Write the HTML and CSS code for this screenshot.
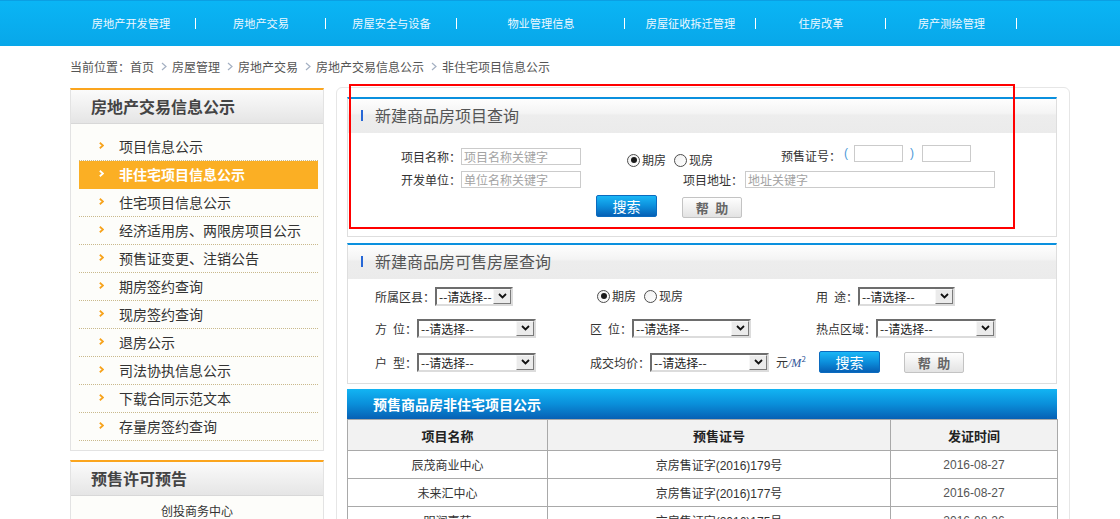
FILE: index.html
```html
<!DOCTYPE html>
<html lang="zh-CN">
<head>
<meta charset="utf-8">
<title>非住宅项目信息公示</title>
<link rel="stylesheet" href="styles.css">
</head>
<body>
<div class="topnav">
  <ul class="nav">
    <li class="nav-item">房地产开发管理</li>
    <li class="nav-item">房地产交易</li>
    <li class="nav-item w131">房屋安全与设备</li>
    <li class="nav-item w168">物业管理信息</li>
    <li class="nav-item w131">房屋征收拆迁管理</li>
    <li class="nav-item">住房改革</li>
    <li class="nav-item w131">房产测绘管理</li>
  </ul>
</div>

<div class="crumbs">当前位置：首页<svg class="gt" viewBox="0 0 6 9" width="6" height="9"><path d="M1 1l4 3.5L1 8" fill="none" stroke="#a4b0c2" stroke-width="1.2"/></svg>房屋管理<svg class="gt" viewBox="0 0 6 9" width="6" height="9"><path d="M1 1l4 3.5L1 8" fill="none" stroke="#a4b0c2" stroke-width="1.2"/></svg>房地产交易<svg class="gt" viewBox="0 0 6 9" width="6" height="9"><path d="M1 1l4 3.5L1 8" fill="none" stroke="#a4b0c2" stroke-width="1.2"/></svg>房地产交易信息公示<svg class="gt" viewBox="0 0 6 9" width="6" height="9"><path d="M1 1l4 3.5L1 8" fill="none" stroke="#a4b0c2" stroke-width="1.2"/></svg>非住宅项目信息公示</div>

<div class="main">
  <aside class="side">
    <div class="box">
      <h2 class="box-title">房地产交易信息公示</h2>
      <ul class="menu">
        <li><svg class="arr" viewBox="0 0 5 7" width="5" height="7"><path d="M.8.8L4 3.5.8 6.2" fill="none" stroke="currentColor" stroke-width="1.8"/></svg>项目信息公示</li>
        <li class="on"><svg class="arr" viewBox="0 0 5 7" width="5" height="7"><path d="M.8.8L4 3.5.8 6.2" fill="none" stroke="currentColor" stroke-width="1.8"/></svg>非住宅项目信息公示</li>
        <li><svg class="arr" viewBox="0 0 5 7" width="5" height="7"><path d="M.8.8L4 3.5.8 6.2" fill="none" stroke="currentColor" stroke-width="1.8"/></svg>住宅项目信息公示</li>
        <li><svg class="arr" viewBox="0 0 5 7" width="5" height="7"><path d="M.8.8L4 3.5.8 6.2" fill="none" stroke="currentColor" stroke-width="1.8"/></svg>经济适用房、两限房项目公示</li>
        <li><svg class="arr" viewBox="0 0 5 7" width="5" height="7"><path d="M.8.8L4 3.5.8 6.2" fill="none" stroke="currentColor" stroke-width="1.8"/></svg>预售证变更、注销公告</li>
        <li><svg class="arr" viewBox="0 0 5 7" width="5" height="7"><path d="M.8.8L4 3.5.8 6.2" fill="none" stroke="currentColor" stroke-width="1.8"/></svg>期房签约查询</li>
        <li><svg class="arr" viewBox="0 0 5 7" width="5" height="7"><path d="M.8.8L4 3.5.8 6.2" fill="none" stroke="currentColor" stroke-width="1.8"/></svg>现房签约查询</li>
        <li><svg class="arr" viewBox="0 0 5 7" width="5" height="7"><path d="M.8.8L4 3.5.8 6.2" fill="none" stroke="currentColor" stroke-width="1.8"/></svg>退房公示</li>
        <li><svg class="arr" viewBox="0 0 5 7" width="5" height="7"><path d="M.8.8L4 3.5.8 6.2" fill="none" stroke="currentColor" stroke-width="1.8"/></svg>司法协执信息公示</li>
        <li><svg class="arr" viewBox="0 0 5 7" width="5" height="7"><path d="M.8.8L4 3.5.8 6.2" fill="none" stroke="currentColor" stroke-width="1.8"/></svg>下载合同示范文本</li>
        <li><svg class="arr" viewBox="0 0 5 7" width="5" height="7"><path d="M.8.8L4 3.5.8 6.2" fill="none" stroke="currentColor" stroke-width="1.8"/></svg>存量房签约查询</li>
      </ul>
    </div>
    <div class="box box2">
      <h2 class="box-title">预售许可预告</h2>
      <ul class="pre-list">
        <li>创投商务中心</li>
      </ul>
    </div>
  </aside>

  <section class="content">
    <div class="panel">
      <div class="panel-head">新建商品房项目查询</div>
      <div class="q1">
        <div class="q1-row q1-r1">
          <span class="lbl q1-lbl">项目名称：</span>
          <input class="ipt ipt-name" type="text" placeholder="项目名称关键字">
          <div class="radios q1-radios">
            <span class="radio on"></span><span class="radio-txt">期房</span>
            <span class="radio"></span><span class="radio-txt">现房</span>
          </div>
          <span class="lbl q1-cert-lbl">预售证号：</span>
          <span class="paren paren-l">(</span>
          <input class="ipt ipt-cert" type="text">
          <span class="paren paren-r">)</span>
          <input class="ipt ipt-cert" type="text">
        </div>
        <div class="q1-row q1-r2">
          <span class="lbl q1-lbl">开发单位：</span>
          <input class="ipt ipt-name" type="text" placeholder="单位名称关键字">
          <span class="lbl q1-addr-lbl">项目地址：</span>
          <input class="ipt ipt-addr" type="text" placeholder="地址关键字">
        </div>
        <div class="q1-row q1-r3">
          <button class="btn-search q1-search" type="button">搜索</button>
          <button class="btn-help q1-help" type="button">帮&ensp;助</button>
        </div>
      </div>
    </div>

    <div class="panel">
      <div class="panel-head">新建商品房可售房屋查询</div>
      <div class="q2">
        <div class="q2-row q2-r1">
          <div class="q2-c1"><span class="lbl">所属区县：</span><div class="sel s78"><span>--请选择--</span><span class="sel-btn"><svg viewBox="0 0 9 6" width="9" height="6"><path d="M1 1l3.5 3.5L8 1" fill="none" stroke="#111" stroke-width="1.8"/></svg></span></div></div>
          <div class="q2-c2">
            <div class="radios q2-radios">
              <span class="radio on"></span><span class="radio-txt">期房</span>
              <span class="radio"></span><span class="radio-txt">现房</span>
            </div>
          </div>
          <div class="q2-c3"><span class="lbl">用&ensp;途：</span><div class="sel s97"><span>--请选择--</span><span class="sel-btn"><svg viewBox="0 0 9 6" width="9" height="6"><path d="M1 1l3.5 3.5L8 1" fill="none" stroke="#111" stroke-width="1.8"/></svg></span></div></div>
        </div>
        <div class="q2-row q2-r2">
          <div class="q2-c1"><span class="lbl">方&ensp;位：</span><div class="sel s119"><span>--请选择--</span><span class="sel-btn"><svg viewBox="0 0 9 6" width="9" height="6"><path d="M1 1l3.5 3.5L8 1" fill="none" stroke="#111" stroke-width="1.8"/></svg></span></div></div>
          <div class="q2-c2"><span class="lbl">区&ensp;位：</span><div class="sel s119"><span>--请选择--</span><span class="sel-btn"><svg viewBox="0 0 9 6" width="9" height="6"><path d="M1 1l3.5 3.5L8 1" fill="none" stroke="#111" stroke-width="1.8"/></svg></span></div></div>
          <div class="q2-c3"><span class="lbl">热点区域：</span><div class="sel s120"><span>--请选择--</span><span class="sel-btn"><svg viewBox="0 0 9 6" width="9" height="6"><path d="M1 1l3.5 3.5L8 1" fill="none" stroke="#111" stroke-width="1.8"/></svg></span></div></div>
        </div>
        <div class="q2-row q2-r3">
          <div class="q2-c1"><span class="lbl">户&ensp;型：</span><div class="sel s119"><span>--请选择--</span><span class="sel-btn"><svg viewBox="0 0 9 6" width="9" height="6"><path d="M1 1l3.5 3.5L8 1" fill="none" stroke="#111" stroke-width="1.8"/></svg></span></div></div>
          <div class="q2-c2"><span class="lbl">成交均价：</span><div class="sel s119"><span>--请选择--</span><span class="sel-btn"><svg viewBox="0 0 9 6" width="9" height="6"><path d="M1 1l3.5 3.5L8 1" fill="none" stroke="#111" stroke-width="1.8"/></svg></span></div><span class="unit">元<i>/M</i><sup>2</sup></span></div>
          <div class="q2-c3"><button class="btn-search q2-search" type="button">搜索</button><button class="btn-help q2-help" type="button">帮&ensp;助</button></div>
        </div>
      </div>
    </div>

    <div class="list">
      <div class="list-title">预售商品房非住宅项目公示</div>
      <table class="tbl">
        <colgroup><col class="c1"><col class="c2"><col class="c3"></colgroup>
        <thead>
          <tr><th>项目名称</th><th>预售证号</th><th>发证时间</th></tr>
        </thead>
        <tbody>
          <tr><td>辰茂商业中心</td><td class="cert">京房售证字(2016)179号</td><td class="date">2016-08-27</td></tr>
          <tr><td>未来汇中心</td><td class="cert">京房售证字(2016)177号</td><td class="date">2016-08-27</td></tr>
          <tr><td>明润嘉苑</td><td class="cert">京房售证字(2016)175号</td><td class="date">2016-08-26</td></tr>
        </tbody>
      </table>
    </div>
  </section>
</div>

<div class="mark"></div>
</body>
</html>
```

FILE: styles.css
```css
* { box-sizing: border-box; }
html { overflow: hidden; }
body {
  margin: 0;
  font-family: "Noto Sans CJK SC", "Liberation Sans", sans-serif;
  font-size: 12px;
  color: #333;
  background: #fff;
}
ul { list-style: none; margin: 0; padding: 0; }

/* top navigation */
.topnav {
  height: 46px;
  border-top: 1px solid #0b9fe3;
  background: linear-gradient(#0ab5f5, #08a7e9);
}
.nav { display: flex; height: 45px; padding-left: 66px; }
.nav-item {
  width: 130px;
  height: 45px;
  line-height: 45px;
  text-align: center;
  color: #eef8ff;
  font-size: 11.2px;
  background: linear-gradient(#fff, #fff) no-repeat right center / 1px 11px;
}
.nav-item.w131 { width: 131px; }
.nav-item.w168 { width: 168px; }

/* breadcrumb */
.crumbs {
  height: 41px;
  padding-left: 70px;
  display: flex;
  align-items: center;
  color: #555;
  font-size: 12px;
}
.gt { margin: 0 5px 0 7px; }

/* layout */
.main { display: flex; align-items: flex-start; padding-left: 70px; }
.side { width: 254px; margin-top: 1px; margin-right: 12px; }

.box {
  border: 1px solid #e3e3e3;
  border-top: 2px solid #fba51e;
  background: #fdfdfa;
}
.box2 { margin-top: 9px; }
.box-title {
  margin: 0;
  height: 34px;
  line-height: 33px;
  padding-left: 20px;
  font-size: 16px;
  font-weight: bold;
  color: #444;
  background: linear-gradient(#fbfbfb, #e5e5e5);
  border-bottom: 1px solid #d8d8d8;
}
.menu { padding: 9px 5px 9px 8px; }
.menu li {
  height: 28px;
  display: flex;
  align-items: center;
  padding-left: 20px;
  padding-bottom: 2px;
  font-size: 14px;
  color: #333;
  border-bottom: 1px dotted #c9b98c;
}
.menu .arr { color: #f7a31c; margin-right: 15px; flex: none; }
.menu li.on {
  background: #fbaf24;
  color: #fff;
  font-weight: bold;
  border-bottom-color: #fbaf24;
}
.menu li.on .arr { color: #fff; }
.pre-list { padding: 5px 0 10px; }
.pre-list li { text-align: center; line-height: 20px; font-size: 12px; color: #333; }

/* right content */
.content {
  width: 734px;
  border: 1px solid #e6e6e6;
  border-radius: 6px;
  padding: 9px 12px 10px 10px;
}
.panel {
  border: 1px solid #dedede;
  border-top: 2px solid #0a90de;
  background: #fff;
}
.panel + .panel { margin-top: 6px; }
.panel-head {
  height: 34px;
  display: flex;
  align-items: center;
  padding-left: 13px;
  padding-bottom: 2px;
  font-size: 16px;
  color: #555;
  background: linear-gradient(#fefefe 0%, #f4f4f4 42%, #ededed 48%, #ebebeb 100%);
}
.panel-head::before {
  content: "";
  width: 2px;
  height: 11px;
  background: #2667d6;
  margin-right: 12px;
}

.lbl { font-size: 12px; line-height: 17px; white-space: nowrap; color: #333; flex: none; }
.ipt {
  height: 17px;
  border: 1px solid #cbcbcb;
  padding: 0 2px;
  font: 12px/15px "Noto Sans CJK SC", "Liberation Sans", sans-serif;
  color: #333;
  background: #fff;
  outline: none;
  flex: none;
}
.ipt::placeholder { color: #a3a3a3; }
.ipt-name { width: 120px; }
.ipt-cert { width: 49px; }
.ipt-addr { width: 250px; }

.radios { display: flex; align-items: center; height: 16px; flex: none; }
.radio {
  width: 13px;
  height: 13px;
  border: 1px solid #4d4d4d;
  border-radius: 50%;
  background: linear-gradient(135deg, #f0f0f0, #fff);
  display: flex;
  align-items: center;
  justify-content: center;
  margin-right: 2px;
}
.radio.on::after {
  content: "";
  width: 6px;
  height: 6px;
  border-radius: 50%;
  background: #1a1a1a;
}
.radio-txt { font-size: 12px; line-height: 16px; margin-right: 8px; }
.radio-txt:last-child { margin-right: 0; }

.btn-search {
  width: 61px;
  height: 22px;
  padding: 0;
  border: 1px solid #0b6bbf;
  border-radius: 2px;
  background: linear-gradient(#1ab7f6, #0c8fdc 50%, #0660b5);
  color: #fff;
  font: 14px/20px "Noto Sans CJK SC", sans-serif;
  flex: none;
}
.btn-help {
  width: 60px;
  height: 21px;
  padding: 0;
  border: 1px solid #c3c3c3;
  border-radius: 2px;
  background: linear-gradient(#fefefe, #e3e3e3);
  color: #666;
  font: bold 13px/19px "Noto Sans CJK SC", sans-serif;
  flex: none;
}

/* panel 1 */
.q1 { height: 103px; padding-top: 12px; }
.q1-row { display: flex; align-items: flex-start; }
.q1-r1 { height: 23px; }
.q1-r2 { height: 17px; margin-top: 3px; }
.q1-r3 { height: 23px; margin-top: 7px; }
.q1-lbl { width: 113px; text-align: right; }
.q1-r1 .q1-lbl, .q1-r1 .ipt-name { margin-top: 3px; }
.q1-radios { margin: 7px 0 0 46px; }
.q1-cert-lbl { width: 60px; margin: 2px 0 0 68px; }
.paren { font-family: "Liberation Sans", sans-serif; font-size: 12px; line-height: 17px; color: #4b9ad8; }
.paren-l { margin: 0 6px 0 3px; }
.paren-r { margin: 0 8px 0 7px; }
.q1-addr-lbl { width: 60px; margin-left: 102px; }
.q1-addr-lbl + .ipt { margin-left: 2px; }
.q1-search { margin-left: 248px; }
.q1-help { margin: 2px 0 0 25px; }

/* panel 2 */
.q2 { height: 104px; padding: 6px 0 0 27px; }
.q2-row { display: flex; align-items: center; height: 22px; }
.q2-r2 { margin-top: 10px; }
.q2-r3 { margin-top: 12px; }
.q2-c1 { width: 215px; display: flex; align-items: center; }
.q2-c2 { width: 226px; display: flex; align-items: center; }
.q2-c3 { display: flex; align-items: center; }
.q2-radios { margin-left: 7px; }
.q2-search { margin-left: 3px; }
.q2-help { margin-left: 24px; }

.sel {
  height: 19px;
  display: flex;
  align-items: center;
  justify-content: space-between;
  padding-left: 2px;
  border: 2px solid;
  border-color: #6d6d6d #dcdcdc #dcdcdc #6d6d6d;
  background: #fff;
  font-size: 12px;
  line-height: 15px;
  color: #222;
  white-space: nowrap;
  flex: none;
}
.s78 { width: 78px; }
.s97 { width: 97px; }
.s119 { width: 119px; }
.s120 { width: 120px; }
.sel-btn {
  width: 18px;
  height: 15px;
  display: flex;
  align-items: center;
  justify-content: center;
  border: 1px solid;
  border-color: #f7f7f7 #7a7a7a #7a7a7a #f7f7f7;
  background: #ebebeb;
}
.unit { margin-left: 7px; font-size: 12px; line-height: 17px; color: #333; white-space: nowrap; }
.unit i { font-family: "Liberation Serif", serif; font-style: italic; color: #2f5597; }
.unit sup { font-size: 8px; color: #2f5597; vertical-align: 5px; line-height: 0; }

/* list table */
.list { margin-top: 5px; }
.list-title {
  height: 30px;
  line-height: 30px;
  padding-left: 26px;
  color: #fff;
  font-size: 14px;
  font-weight: bold;
  background: linear-gradient(#12b4f3, #0a8fda 50%, #0760b4);
}
.tbl { width: 100%; border-collapse: collapse; table-layout: fixed; }
.tbl .c1 { width: 200px; }
.tbl .c2 { width: 343px; }
.tbl .c3 { width: 167px; }
.tbl th, .tbl td { border: 1px solid #a9a9a9; text-align: center; padding: 0; }
.tbl th { height: 31px; background: #f2f2f2; font-size: 13px; font-weight: bold; color: #222; }
.tbl td { height: 28px; font-size: 12px; color: #333; }
.tbl .cert { font-family: "Liberation Sans", "Noto Sans CJK SC", sans-serif; }
.tbl .date { font-family: "Liberation Sans", sans-serif; color: #555; }

/* red annotation rectangle */
.mark {
  position: absolute;
  left: 349px;
  top: 84px;
  width: 666px;
  height: 145px;
  border: 2px solid #f00;
  pointer-events: none;
}
```
